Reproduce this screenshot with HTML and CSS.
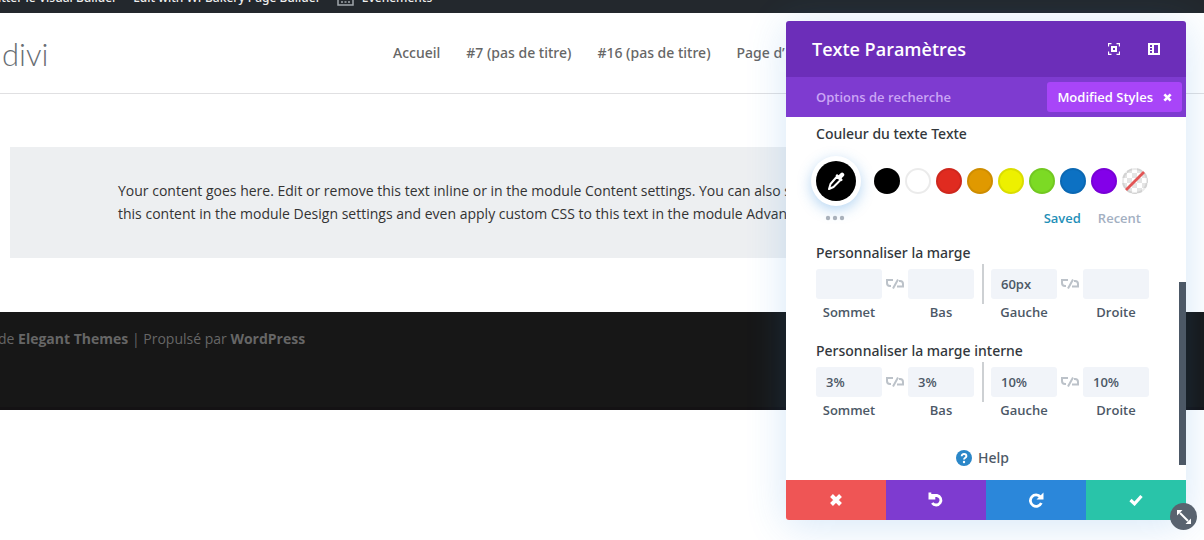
FILE: index.html
```html
<!DOCTYPE html>
<html lang="fr">
<head>
<meta charset="utf-8">
<title>Divi</title>
<link rel="stylesheet" href="styles.css">
</head>
<body>
<div class="adminbar">
  <nav class="adminbar-items">
    <a href="#">Quitter le Visual Builder</a>
    <a href="#">Edit with WPBakery Page Builder</a>
    <a href="#" class="events"><svg width="17" height="18" viewBox="0 0 17 18" fill="none" stroke="#a0a5aa" stroke-width="1.5"><path d="M1 2h15v14H1zM1 6h15M4 9.500h2M7.500 9.500h2M11 9.500h2M4 13h2M7.500 13h2M11 13h2"/></svg>Évènements</a>
  </nav>
</div>
<header class="site-header">
  <a class="logo" href="#">divi</a>
  <nav class="menu">
    <a href="#">Accueil</a>
    <a href="#">#7 (pas de titre)</a>
    <a href="#">#16 (pas de titre)</a>
    <a href="#">Page d’</a>
  </nav>
</header>
<main class="content">
  <p class="text-module">Your content goes here. Edit or remove this text inline or in the module Content settings. You can also style every aspect of<br>this content in the module Design settings and even apply custom CSS to this text in the module Advanced settings.</p>
</main>
<footer class="site-footer">de <b>Elegant Themes</b> | Propulsé par <b>WordPress</b></footer>

<section class="panel" aria-label="Texte Paramètres">
  <header class="panel-head">
    <h2>Texte Paramètres</h2>
    <button class="plain" aria-label="Agrandir"><svg width="12" height="12" viewBox="0 0 12 12" fill="none" stroke="#fff"><path d="M.5 3.500V.5h3M8.500 .5h3v3M11.500 8.500v3h-3M3.500 11.500h-3v-3" stroke-width="1.300"/><path d="M4 4h4v4H4z" stroke-width="2"/></svg></button>
    <button class="plain" aria-label="Ancrer"><svg width="12" height="12" viewBox="0 0 12 12"><path fill="#fff" fill-rule="evenodd" d="M0 0h12v12H0zM6 2v8h4V2zM2 2v2h2V2zM2 5v2h2V5zM2 8v2h2V8z"/></svg></button>
  </header>
  <div class="search">
    <input type="text" placeholder="Options de recherche" aria-label="Options de recherche">
    <button class="filter">Modified Styles <svg width="9" height="9" viewBox="0 0 10 10"><path d="M1.500 1.500l7 7M8.500 1.500l-7 7" stroke="#fff" stroke-width="3"/></svg></button>
  </div>
  <div class="panel-body">
    <h3>Couleur du texte Texte</h3>
    <div class="colors">
      <button class="picker" aria-label="Choisir une couleur"><svg width="18" height="18" viewBox="0 0 18 18"><path d="M10 4.500l3.500 3.500-7 7-4.500 2 1.500-5z" fill="none" stroke="#fff" stroke-width="2" stroke-linejoin="round"/><path d="M8.500 3.500l1.500-1.400 1.600 1.200 2-2a1.900 1.900 0 0 1 3 3l-2 2 1.200 1.600-1.400 1.400z" fill="#fff"/></svg></button>
      <div class="swatches">
        <button class="swatch black" aria-label="Noir"></button>
        <button class="swatch white" aria-label="Blanc"></button>
        <button class="swatch red" aria-label="Rouge"></button>
        <button class="swatch orange" aria-label="Orange"></button>
        <button class="swatch yellow" aria-label="Jaune"></button>
        <button class="swatch green" aria-label="Vert"></button>
        <button class="swatch blue" aria-label="Bleu"></button>
        <button class="swatch violet" aria-label="Violet"></button>
        <button class="swatch none" aria-label="Transparent"><svg width="26" height="26" viewBox="0 0 26 26"><path d="M4 22L22 4" stroke="#e25555" stroke-width="2.800"/></svg></button>
      </div>
    </div>
    <div class="tabs">
      <button class="plain more" aria-label="Plus"><svg width="20" height="6" viewBox="0 0 20 6" fill="#a9b1bb"><circle cx="3" cy="3" r="2.200"/><circle cx="10" cy="3" r="2.200"/><circle cx="17" cy="3" r="2.200"/></svg></button>
      <button class="plain saved">Saved</button>
      <button class="plain recent">Recent</button>
    </div>
    <h3>Personnaliser la marge</h3>
    <div class="spacing">
      <input type="text" id="m1"><svg class="link" width="18" height="10" viewBox="0 0 18 10"><path d="M7 1H1v3a3 3 0 0 0 3 3h1M7 9.500L12 .5M13 2h1a3 3 0 0 1 3 3v2.500h-6"/></svg><input type="text" id="m2">
      <span class="bar"></span>
      <input type="text" id="m3" value="60px"><svg class="link" width="18" height="10" viewBox="0 0 18 10"><path d="M7 1H1v3a3 3 0 0 0 3 3h1M7 9.500L12 .5M13 2h1a3 3 0 0 1 3 3v2.500h-6"/></svg><input type="text" id="m4">
      <label class="c1" for="m1">Sommet</label><label class="c3" for="m2">Bas</label><label class="c5" for="m3">Gauche</label><label class="c7" for="m4">Droite</label>
    </div>
    <h3>Personnaliser la marge interne</h3>
    <div class="spacing">
      <input type="text" id="p1" value="3%"><svg class="link" width="18" height="10" viewBox="0 0 18 10"><path d="M7 1H1v3a3 3 0 0 0 3 3h1M7 9.500L12 .5M13 2h1a3 3 0 0 1 3 3v2.500h-6"/></svg><input type="text" id="p2" value="3%">
      <span class="bar"></span>
      <input type="text" id="p3" value="10%"><svg class="link" width="18" height="10" viewBox="0 0 18 10"><path d="M7 1H1v3a3 3 0 0 0 3 3h1M7 9.500L12 .5M13 2h1a3 3 0 0 1 3 3v2.500h-6"/></svg><input type="text" id="p4" value="10%">
      <label class="c1" for="p1">Sommet</label><label class="c3" for="p2">Bas</label><label class="c5" for="p3">Gauche</label><label class="c7" for="p4">Droite</label>
    </div>
    <a class="help" href="#"><svg width="16" height="16" viewBox="0 0 16 16"><circle cx="8" cy="8" r="8" fill="#2b87c8"/><path d="M5.700 6.200c0-3 4.700-2.800 4.700 0C10.400 7.800 8 7.700 8 9.500" fill="none" stroke="#fff" stroke-width="1.900"/><circle cx="8" cy="12" r="1.200" fill="#fff"/></svg>Help</a>
    <span class="thumb"></span>
  </div>
  <footer class="actions">
    <button class="cancel" aria-label="Annuler"><svg width="14" height="14" viewBox="0 0 14 14"><path d="M2.500 2.500l9 9M11.500 2.500l-9 9" stroke="#fff" stroke-width="4"/></svg></button>
    <button class="undo" aria-label="Défaire"><svg width="16" height="16" viewBox="0 0 16 16"><path d="M1.500 3.500H9a4.800 4.800 0 1 1-4.800 7.500" fill="none" stroke="#fff" stroke-width="2.800"/><path d="M.5.500h2.800v3h4v4H.5z" fill="#fff"/></svg></button>
    <button class="redo" aria-label="Refaire"><svg width="16" height="16" viewBox="0 0 16 16"><path d="M12.500 5A5.700 5.700 0 1 0 13.300 11" fill="none" stroke="#fff" stroke-width="2.800"/><path d="M15.500.5v7h-7z" fill="#fff"/></svg></button>
    <button class="save" aria-label="Enregistrer"><svg width="14" height="12" viewBox="0 0 14 12"><path d="M1.500 6l4 3.800L12.500 2" fill="none" stroke="#fff" stroke-width="3.200"/></svg></button>
  </footer>
  <button class="resize" aria-label="Redimensionner"><svg width="14" height="14" viewBox="0 0 14 14"><path d="M3 3l8 8" stroke="#fff" stroke-width="2"/><path d="M0 0h5.500L0 5.500zM14 14H8.500L14 8.500z" fill="#fff"/></svg></button>
</section>
</body>
</html>
```
FILE: styles.css
```css
* { box-sizing: border-box; }
body {
  margin: 0;
  min-height: 100vh;
  overflow: hidden;
  background: #fff;
  font: 14px/23px "Open Sans", "Noto Sans", sans-serif;
}
a { color: inherit; text-decoration: none; }
button, input { font: inherit; color: inherit; border: 0; padding: 0; margin: 0; }
button { cursor: pointer; }
svg { display: block; flex: none; }
h2, h3, p { margin: 0; }

.adminbar {
  display: flex;
  align-items: flex-end;
  height: 13px;
  overflow: hidden;
  background: #23282d;
  color: #eee;
  font: 500 12px/30px "Noto Sans", sans-serif;
}
.adminbar-items { display: flex; gap: 16px; margin-left: -19px; white-space: nowrap; }
.events { display: flex; align-items: center; gap: 8px; }

.site-header {
  display: flex;
  align-items: center;
  height: 81px;
  padding-bottom: 1px;
  border-bottom: 1px solid #e0e0e2;
  color: #666;
}
.logo {
  flex: 0 0 393px;
  padding-left: 2px;
  padding-top: 3px;
  color: #686d73;
  font: 300 31px/40px Lato, sans-serif;
}
.menu { display: flex; gap: 26px; white-space: nowrap; font-family: "Noto Sans", sans-serif; font-weight: 500; }

.content { padding: 53px 114px 54px 10px; }
.text-module { padding: 32px 108px 33px 108px; background: #edeff1; color: #333; }
.site-footer {
  height: 98px;
  padding-top: 15px;
  background: #171717;
  border-bottom: 3px solid #141214;
  color: #666;
  text-indent: -2px;
}
.site-footer b { font-weight: 700; }

.panel {
  position: absolute;
  top: 21px;
  right: 18px;
  width: 400px;
  border-radius: 3px;
  background: #fff;
  color: #4c5866;
  box-shadow: 0 5px 40px rgba(43, 135, 218, .2);
  font-weight: 600;
}
.plain { background: none; }
.panel-head {
  display: flex;
  align-items: center;
  gap: 28px;
  height: 56px;
  padding: 0 26px;
  border-radius: 3px 3px 0 0;
  background: #6c2eb9;
  color: #fff;
}
.panel-head h2 { flex: 1; font-size: 18px; line-height: 24px; font-weight: 600; }
.search {
  display: flex;
  align-items: center;
  height: 40px;
  padding: 0 4px 0 30px;
  background: #7e3bd0;
  color: #fff;
  font-size: 13px;
}
.search input { flex: 1; min-width: 0; background: none; }
.search input::placeholder { color: #cba5f5; opacity: 1; }
.filter {
  display: flex;
  align-items: center;
  gap: 10px;
  height: 30px;
  padding: 0 10px;
  border-radius: 3px;
  background: #a845f8;
}
.panel-body { position: relative; padding: 7px 37px 12px 30px; font-size: 13px; line-height: 20px; }
.panel-body h3 {
  color: #32373c;
  font: 500 14px/20px "Noto Sans", sans-serif;
}

.colors { display: flex; align-items: center; gap: 18px; margin: 17px 0 7px; }
.picker {
  display: grid;
  place-items: center;
  width: 40px;
  height: 40px;
  border-radius: 50%;
  background: #000;
  box-shadow: 0 0 0 5px #fff, 0 4px 14px 5px rgba(43, 135, 218, .35);
}
.swatches { display: flex; gap: 5px; }
.swatch { width: 26px; height: 26px; border-radius: 50%; box-shadow: inset 0 0 0 2px rgba(0, 0, 0, .08); }
.black { background: #000; }
.white { background: #fff; }
.red { background: #e02b20; }
.orange { background: #e09900; }
.yellow { background: #edf000; }
.green { background: #7cda24; }
.blue { background: #0c71c3; }
.violet { background: #8300e9; }
.none { background: repeating-conic-gradient(#e4e4e4 0 25%, #fff 0 50%) 0 0 / 10px 10px; }

.tabs { display: flex; gap: 17px; padding: 0 8px 0 9px; margin-bottom: 15px; }
.more { margin-right: auto; }
.saved { color: #1f8fb8; }
.recent { color: #a3b0c2; }

.spacing {
  display: grid;
  grid-template-columns: 66fr 26fr 66fr 17fr 66fr 26fr 66fr;
  grid-template-rows: 40px 16px;
  align-items: center;
  justify-items: center;
  margin: 1px 0 21px;
}
.spacing input {
  width: 100%;
  min-width: 0;
  height: 30px;
  padding: 0 10px;
  border-radius: 3px;
  background: #f1f4f9;
}
.spacing label { line-height: 16px; }
.c1 { grid-column: 1; }
.c3 { grid-column: 3; }
.c5 { grid-column: 5; }
.c7 { grid-column: 7; }
.link { fill: none; stroke: #bcc2c9; stroke-width: 2; }
.bar { width: 2px; height: 40px; background: #cdd0d3; }
.help {
  display: flex;
  align-items: center;
  justify-content: center;
  gap: 6px;
  margin-top: 30px;
  font: 500 14px/20px "Noto Sans", sans-serif;
}
.thumb { position: absolute; right: 0; top: 165px; bottom: 15px; width: 7px; background: #4c5866; }

.actions { display: grid; grid-template-columns: repeat(4, 1fr); height: 40px; }
.actions button { display: grid; place-items: center; }
.cancel { background: #ef5555; border-radius: 0 0 0 3px; }
.undo { background: #7e3bd0; }
.redo { background: #2b87da; }
.save { background: #29c4a9; }
.resize {
  position: absolute;
  right: -11px;
  bottom: -10px;
  display: grid;
  place-items: center;
  width: 27px;
  height: 27px;
  border-radius: 50%;
  background: #59636f;
}
```
